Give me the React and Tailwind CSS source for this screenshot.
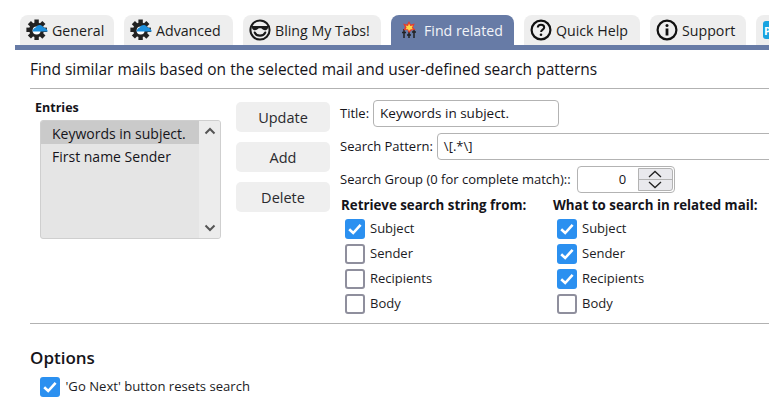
import React from "react";

const font = { fontFamily: '"Open Sans", "Noto Sans", sans-serif' };

function Gear() {
  const teeth = [0, 45, 90, 135];
  return (
    <svg width="22" height="22" viewBox="0 0 22 22" className="shrink-0">
      {teeth.map((a) => (
        <rect key={a} x="8.4" y="0.5" width="4.4" height="20.5" fill="#222" transform={`rotate(${a} 10.6 10.8)`} />
      ))}
      <circle cx="10.6" cy="10.8" r="7.4" fill="#222" />
      <circle cx="10.6" cy="11.5" r="4" fill="#fff" />
      <path d="M6.5 12.6C7 9.8 8.6 8.6 10 8.2C11 6.4 13 5.6 15 6.2C16.3 6.6 17 7.6 17.4 8.4C19.3 8.4 21.2 10 22 12.6Z" fill="#1d8fdc" />
    </svg>
  );
}

function Cool() {
  return (
    <svg width="22" height="22" viewBox="0 0 22 22" className="shrink-0">
      <circle cx="11" cy="11" r="9.6" fill="none" stroke="#1a1a1a" strokeWidth="2" />
      <path d="M2.5 7H19.5L18.8 9.6C18 11.6 15.4 11.8 13.8 10.6L12.2 9.2H9.8L8.2 10.6C6.6 11.8 4 11.6 3.2 9.6Z" fill="#1a1a1a" />
      <path d="M5.8 13.6C7.4 17.6 14.6 17.6 16.2 13.6" fill="none" stroke="#1a1a1a" strokeWidth="2.2" strokeLinecap="round" />
    </svg>
  );
}

function Help() {
  return (
    <svg width="22" height="22" viewBox="0 0 22 22" className="shrink-0">
      <circle cx="11" cy="11" r="9.4" fill="none" stroke="#111" strokeWidth="2.2" />
      <path d="M7.8 8.6C7.8 6.7 9.3 5.8 11 5.8C12.8 5.8 14.2 6.9 14.2 8.5C14.2 10.6 11.1 10.7 11.1 13" fill="none" stroke="#111" strokeWidth="2" />
      <circle cx="11" cy="15.7" r="1.3" fill="#111" />
    </svg>
  );
}

function Info() {
  return (
    <svg width="22" height="22" viewBox="0 0 22 22" className="shrink-0">
      <circle cx="11" cy="11" r="9.4" fill="none" stroke="#111" strokeWidth="2.2" />
      <circle cx="11" cy="6.6" r="1.5" fill="#111" />
      <path d="M11 9.5V16.5" stroke="#111" strokeWidth="2.8" />
    </svg>
  );
}

function Sparkle() {
  return (
    <svg width="16" height="18" viewBox="0 0 16 18" className="shrink-0">
      <path d="M3 8V17M8 8V17M13 8V17" stroke="#222" strokeWidth="1.5" />
      <path d="M1 11.5H5M6 14H10M11 11H15" stroke="#222" strokeWidth="1.5" />
      <path d="M8 0L9.8 3.5L13.8 2.5L12 6.2L14.5 9L10.6 9.2L8 12L6.4 9L2.5 9.2L4 6L2 2.5L6 3.5Z" fill="#e53c2e" />
      <path d="M8 2.6L9.3 5L12 4.6L10.8 6.8L12 8.2L9.8 8.2L8 10L6.9 8.2L4.6 8.2L5.6 6.4L4.6 4.6L7 5Z" fill="#fbd84a" />
    </svg>
  );
}

function Tab({ w, icon, label, active, pad = "pl-[6px]", gap = "gap-[4px]" }) {
  return (
    <div
      className={`flex h-[30px] shrink-0 items-center rounded-t-[8px] ${pad} ${gap} text-[14.2px] ${
        active ? "bg-[#677ba6] text-[#f2f4f8]" : "bg-[#eeeeee] text-[#1c1c20]"
      }`}
      style={{ width: w }}
    >
      {icon}
      <span className="whitespace-nowrap pt-[2px] leading-none">{label}</span>
    </div>
  );
}

function Check({ checked, label, gapClass = "gap-[5px]", size = "text-[13px]" }) {
  return (
    <div className={`flex h-[25px] items-center ${gapClass}`}>
      {checked ? (
        <span className="flex h-[20px] w-[20px] shrink-0 items-center justify-center rounded-[3px] bg-[#2b90f0]">
          <svg width="16" height="14" viewBox="0 0 16 14">
            <path d="M2.2 7.2L6.2 11L13.6 2.8" fill="none" stroke="#fff" strokeWidth="2.6" />
          </svg>
        </span>
      ) : (
        <span className="h-[20px] w-[20px] shrink-0 rounded-[3px] border-2 border-[#8f8f9d] bg-white" />
      )}
      <span className={`whitespace-nowrap ${size} text-[#1c1c24]`}>{label}</span>
    </div>
  );
}

function Btn({ children }) {
  return (
    <div className="flex h-[30px] w-[94px] items-center justify-center rounded-[5px] bg-[#efefef] pt-[2px] text-[14.5px] text-[#2a2a2e]">
      {children}
    </div>
  );
}

export default function App() {
  return (
    <div className="h-[412px] w-[769px] overflow-hidden bg-white text-[#15141a]" style={font}>
      <div className="flex gap-[10px] pl-[20px] pt-[15px]">
        <Tab w={94} icon={<Gear />} label="General" />
        <Tab w={109} icon={<Gear />} label="Advanced" />
        <Tab w={138} icon={<Cool />} label="Bling My Tabs!" />
        <Tab w={123} icon={<Sparkle />} label="Find related" active pad="pl-[10px]" gap="gap-[7px]" />
        <Tab w={116} icon={<Help />} label="Quick Help" />
        <Tab w={96} icon={<Info />} label="Support" />
        <div className="flex h-[30px] min-w-0 flex-1 items-center rounded-tl-[8px] bg-[#eeeeee] pl-[7px]">
          <span className="flex h-[18px] w-[6px] items-center overflow-hidden rounded-l-[3px] bg-[#18a3e0] pl-px text-[11px] font-bold leading-none text-white">P</span>
        </div>
      </div>
      <div className="ml-[15px] h-[5px] bg-[#677ba6]" />

      <div className="pl-[30px]">
        <div className="flex h-[38px] items-center whitespace-nowrap pt-[2px] text-[15.5px] leading-none">
          Find similar mails based on the selected mail and user-defined search patterns
        </div>
        <div className="h-px bg-[#b2b2b2]" />

        <div className="flex h-[234px]">
          <div className="w-[206px] shrink-0 pl-[5px] pt-[11px]">
            <div className="h-[20px] text-[12.5px] font-bold leading-[15px]">Entries</div>
            <div className="ml-[5px] flex h-[119px] w-[181px] overflow-hidden rounded-[3px] border border-[#cfcfcf] bg-[#e5e5e5] text-[14px] leading-[25px]">
              <div className="min-w-0 flex-1">
                <div className="h-[23px] whitespace-nowrap bg-[#cacaca] pl-[11px]">Keywords in subject.</div>
                <div className="h-[23px] whitespace-nowrap pl-[11px]">First name Sender</div>
              </div>
              <div className="flex w-[21px] flex-col items-center justify-between bg-[#ececec] py-[6px]">
                <svg width="12" height="8" viewBox="0 0 12 8"><path d="M1.5 6.5L6 2L10.5 6.5" fill="none" stroke="#555" strokeWidth="2" /></svg>
                <svg width="12" height="8" viewBox="0 0 12 8"><path d="M1.5 1.5L6 6L10.5 1.5" fill="none" stroke="#555" strokeWidth="2" /></svg>
              </div>
            </div>
          </div>

          <div className="flex w-[104px] shrink-0 flex-col gap-[10px] pt-[13px]">
            <Btn>Update</Btn>
            <Btn>Add</Btn>
            <Btn>Delete</Btn>
          </div>

          <div className="min-w-0 flex-1 pt-[11px]">
            <div className="flex h-[27px] items-center gap-[4px] text-[13px]">
              <span>Title:</span>
              <div className="flex h-[27px] w-[186px] items-center rounded-[4px] border border-[#b3b3b3] pl-[6px] text-[13.5px]">Keywords in subject.</div>
            </div>
            <div className="mt-[6px] flex h-[27px] items-center gap-[4px] text-[13px]">
              <span className="whitespace-nowrap">Search Pattern:</span>
              <div className="flex h-[27px] w-[340px] shrink-0 items-center rounded-[4px] border border-[#b3b3b3] pl-[6px] text-[13px]">\[.*\]</div>
            </div>
            <div className="mt-[6px] flex h-[27px] items-center gap-[6px] text-[13px]">
              <span className="whitespace-nowrap">Search Group (0 for complete match)::</span>
              <div className="flex h-[27px] w-[98px] shrink-0 items-center justify-between rounded-[4px] border border-[#b3b3b3] pl-[41px] pr-px">
                <span>0</span>
                <div className="flex h-[23px] w-[35px] flex-col overflow-hidden rounded-r-[3px] border border-[#b3b3b3] bg-[#e9e9ed]">
                  <div className="flex flex-1 items-center justify-center border-b border-[#b3b3b3]">
                    <svg width="16" height="8" viewBox="0 0 16 8"><path d="M2 7L8 1.5L14 7" fill="none" stroke="#222" strokeWidth="1.3" /></svg>
                  </div>
                  <div className="flex flex-1 items-center justify-center">
                    <svg width="16" height="8" viewBox="0 0 16 8"><path d="M2 1L8 6.5L14 1" fill="none" stroke="#222" strokeWidth="1.3" /></svg>
                  </div>
                </div>
              </div>
            </div>
            <div className="mt-[2px] flex">
              <div className="w-[212px] shrink-0">
                <div className="h-[21px] whitespace-nowrap pl-px text-[13.3px] font-bold leading-[20px]">Retrieve search string from:</div>
                <div className="pl-[5px]">
                  <Check checked label="Subject" />
                  <Check label="Sender" />
                  <Check label="Recipients" />
                  <Check label="Body" />
                </div>
              </div>
              <div className="shrink-0">
                <div className="h-[21px] whitespace-nowrap pl-px text-[13.3px] font-bold leading-[20px]">What to search in related mail:</div>
                <div className="pl-[5px]">
                  <Check checked label="Subject" />
                  <Check checked label="Sender" />
                  <Check checked label="Recipients" />
                  <Check label="Body" />
                </div>
              </div>
            </div>
          </div>
        </div>

        <div className="h-px bg-[#b2b2b2]" />
        <div className="flex h-[46px] items-end text-[17px] font-semibold leading-[24px]">Options</div>
        <div className="pl-[10px] pt-[4px]">
          <Check checked label="'Go Next' button resets search" gapClass="gap-[5.5px]" size="text-[13.1px]" />
        </div>
      </div>
    </div>
  );
}
